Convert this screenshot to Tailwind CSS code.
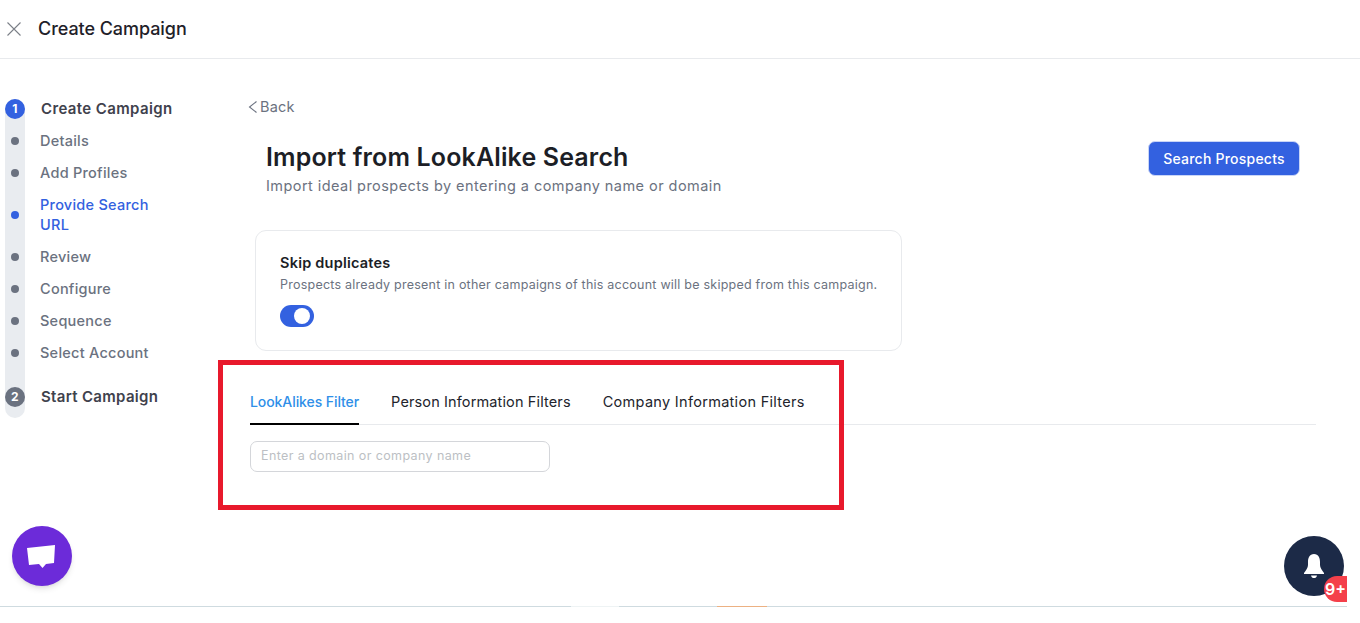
<!DOCTYPE html>
<html lang="en">
<head>
    <meta charset="UTF-8">
    <meta name="viewport" content="width=device-width, initial-scale=1.0">
    <title>Create Campaign</title>
    <script src="https://cdn.jsdelivr.net/npm/@tailwindcss/browser@4"></script>
</head>
<body class="bg-white font-['Inter',sans-serif] overflow-hidden">
<div class="relative h-[623px] w-[1360px] flex flex-col overflow-hidden">

    <!-- top bar -->
    <header class="h-[59px] shrink-0 flex items-center gap-[17px] pl-[7px] border-b border-[#e8eaed]">
        <svg class="w-[14px] h-[14px]" viewBox="0 0 14 14" fill="none" stroke="#7b7f87" stroke-width="1.1"><path d="M.5.5l13 13M13.5.5l-13 13"/></svg>
        <span class="-mt-[2px] text-[18px] font-medium tracking-[-0.06px] text-[#1f2129]">Create Campaign</span>
    </header>

    <div class="h-[547px] shrink-0 flex">

        <!-- steps -->
        <aside class="w-[248px] shrink-0 pt-[40px] pl-[5px]">
            <div class="w-[20px] h-[319px] bg-[#e9ecf0] rounded-full relative">
                <ul class="w-[200px] flex flex-col text-[14.5px] font-medium text-[#6b7280] tracking-[0.25px]">
                    <li class="h-[20px] flex items-center gap-[16px]">
                        <span class="w-[20px] h-[20px] rounded-full bg-[#3361e0] text-white text-[12px] font-bold flex items-center justify-center">1</span>
                        <span class="text-[15px] font-semibold tracking-[0.38px] text-[#3f424d]">Create Campaign</span>
                    </li>
                    <li class="mt-[12px] h-[20px] flex items-center gap-[21px] pl-[6px]"><i class="w-[8px] h-[8px] rounded-full bg-[#6b7280]"></i><span>Details</span></li>
                    <li class="mt-[12px] h-[20px] flex items-center gap-[21px] pl-[6px]"><i class="w-[8px] h-[8px] rounded-full bg-[#6b7280]"></i><span>Add Profiles</span></li>
                    <li class="mt-[12px] h-[40px] flex items-center gap-[21px] pl-[6px] text-[#3361e0]"><i class="w-[8px] h-[8px] shrink-0 rounded-full bg-[#3361e0]"></i><span class="leading-[20px]">Provide Search<br>URL</span></li>
                    <li class="mt-[12px] h-[20px] flex items-center gap-[21px] pl-[6px]"><i class="w-[8px] h-[8px] rounded-full bg-[#6b7280]"></i><span>Review</span></li>
                    <li class="mt-[12px] h-[20px] flex items-center gap-[21px] pl-[6px]"><i class="w-[8px] h-[8px] rounded-full bg-[#6b7280]"></i><span>Configure</span></li>
                    <li class="mt-[12px] h-[20px] flex items-center gap-[21px] pl-[6px]"><i class="w-[8px] h-[8px] rounded-full bg-[#6b7280]"></i><span>Sequence</span></li>
                    <li class="mt-[12px] h-[20px] flex items-center gap-[21px] pl-[6px]"><i class="w-[8px] h-[8px] rounded-full bg-[#6b7280]"></i><span>Select Account</span></li>
                    <li class="mt-[24px] h-[20px] flex items-center gap-[16px]">
                        <span class="w-[20px] h-[20px] rounded-full bg-[#6b7280] text-white text-[12px] font-bold flex items-center justify-center">2</span>
                        <span class="text-[15px] font-semibold tracking-[0.32px] text-[#3f424d]">Start Campaign</span>
                    </li>
                </ul>
            </div>
        </aside>

        <!-- main -->
        <main class="w-[1068px] shrink-0 pt-[38px]">
            <div class="h-[20px] flex items-center gap-[2px] text-[14.5px] text-[#6b7280] tracking-[0.2px]">
                <svg class="w-[10px] h-[12px]" viewBox="0 0 10 12" fill="none" stroke="#6b7280" stroke-width="1.1"><path d="M8.5 .5L1.500 6l7 5.500"/></svg>
                Back
            </div>

            <div class="mt-[23px] flex justify-between pl-[18px] pr-[16px]">
                <div>
                    <h1 class="h-[34px] leading-[34px] text-[25px] font-semibold tracking-[0.14px] text-[#1c1e26]">Import from LookAlike Search</h1>
                    <p class="mt-[2px] h-[20px] leading-[20px] text-[14.5px] tracking-[0.44px] text-[#6b7280]">Import ideal prospects by entering a company name or domain</p>
                </div>
                <button class="mt-[1px] w-[152px] h-[35px] rounded-[7px] bg-[#3361e0] border border-[#c9d5f7] text-white text-[14px] font-medium tracking-[0.22px]">Search Prospects</button>
            </div>

            <section class="ml-[7px] mt-[34px] w-[647px] h-[121px] border border-[#e8eaed] rounded-[11px] pl-[24px] pt-[22px]">
                <h2 class="h-[20px] leading-[20px] text-[14.5px] font-semibold tracking-[0.22px] text-[#1c1e26]">Skip duplicates</h2>
                <p class="mt-[2px] h-[20px] leading-[20px] text-[12.5px] tracking-[0.23px] text-[#6b7280]">Prospects already present in other campaigns of this account will be skipped from this campaign.</p>
                <div class="mt-[10px] w-[34px] h-[22px] rounded-full bg-[#3361e0] flex items-center justify-end pr-[4px]">
                    <span class="w-[16px] h-[16px] rounded-full bg-white"></span>
                </div>
            </section>

            <nav class="ml-[2px] mt-[34px] w-[1066px] h-[40px] flex gap-[32px] border-b border-[#e8eaed] text-[14.5px] text-[#22242c]">
                <span class="h-[40px] leading-[34px] border-b-2 border-black text-[14px] font-medium text-[#2f8fe8] tracking-[-0.08px]">LookAlikes Filter</span>
                <span class="leading-[34px] tracking-[0.13px]">Person Information Filters</span>
                <span class="leading-[34px] tracking-[0.3px]">Company Information Filters</span>
            </nav>

            <input type="text" placeholder="Enter a domain or company name" class="block ml-[2px] mt-[16px] w-[300px] h-[31px] px-[10px] pb-[2px] border border-[#d4d6da] rounded-[7px] text-[12.5px] tracking-[0.39px] placeholder:text-[#bcbfc4] outline-none">
        </main>
    </div>

    <!-- bottom edge with faint banner colours -->
    <div class="w-[1347px] h-[1px] shrink-0 bg-[#cfdbe0] flex">
        <div class="ml-[571px] w-[48px] h-full bg-[#eef3f4]"></div>
        <div class="ml-[98px] w-[50px] h-full bg-[#ecb183]"></div>
    </div>

    <!-- annotation box -->
    <div class="absolute left-[218px] top-[360px] w-[626px] h-[150px] border-[5px] border-[#e8192c] pointer-events-none"></div>

    <!-- chat launcher -->
    <div class="absolute left-[12px] top-[526px] w-[60px] h-[60px] rounded-full bg-[#6c2bd9] shadow-md flex items-center justify-center">
        <svg class="w-[30px] h-[26px]" viewBox="0 0 30 26" fill="#fff"><path d="M0 5L28 2l-1 18-8 1-3.500 4L12 21 2 22z"/></svg>
    </div>

    <!-- notifications -->
    <div class="absolute left-[1284px] top-[536px] w-[60px] h-[60px] rounded-full bg-[#1c2a47] flex items-center justify-center">
        <svg class="w-[22px] h-[26px]" viewBox="0 0 22 26" fill="#fff"><path d="M11 1C6.500 1 5 5 5 9v3c0 3-2 5-4 8v1h20v-1c-2-3-4-5-4-8V9c0-4-1.500-8-6-8z"/><path d="M8 22.500c.5 2 1.500 2.500 3 2.500s2.500-.5 3-2.500z"/></svg>
    </div>
    <div class="absolute left-[1324px] top-[576px] w-[23px] h-[26px] rounded-l-full rounded-r-[12px] bg-[#f4404a] text-white text-[16px] font-semibold flex items-center justify-center">9+</div>
</div>
</body>
</html>
